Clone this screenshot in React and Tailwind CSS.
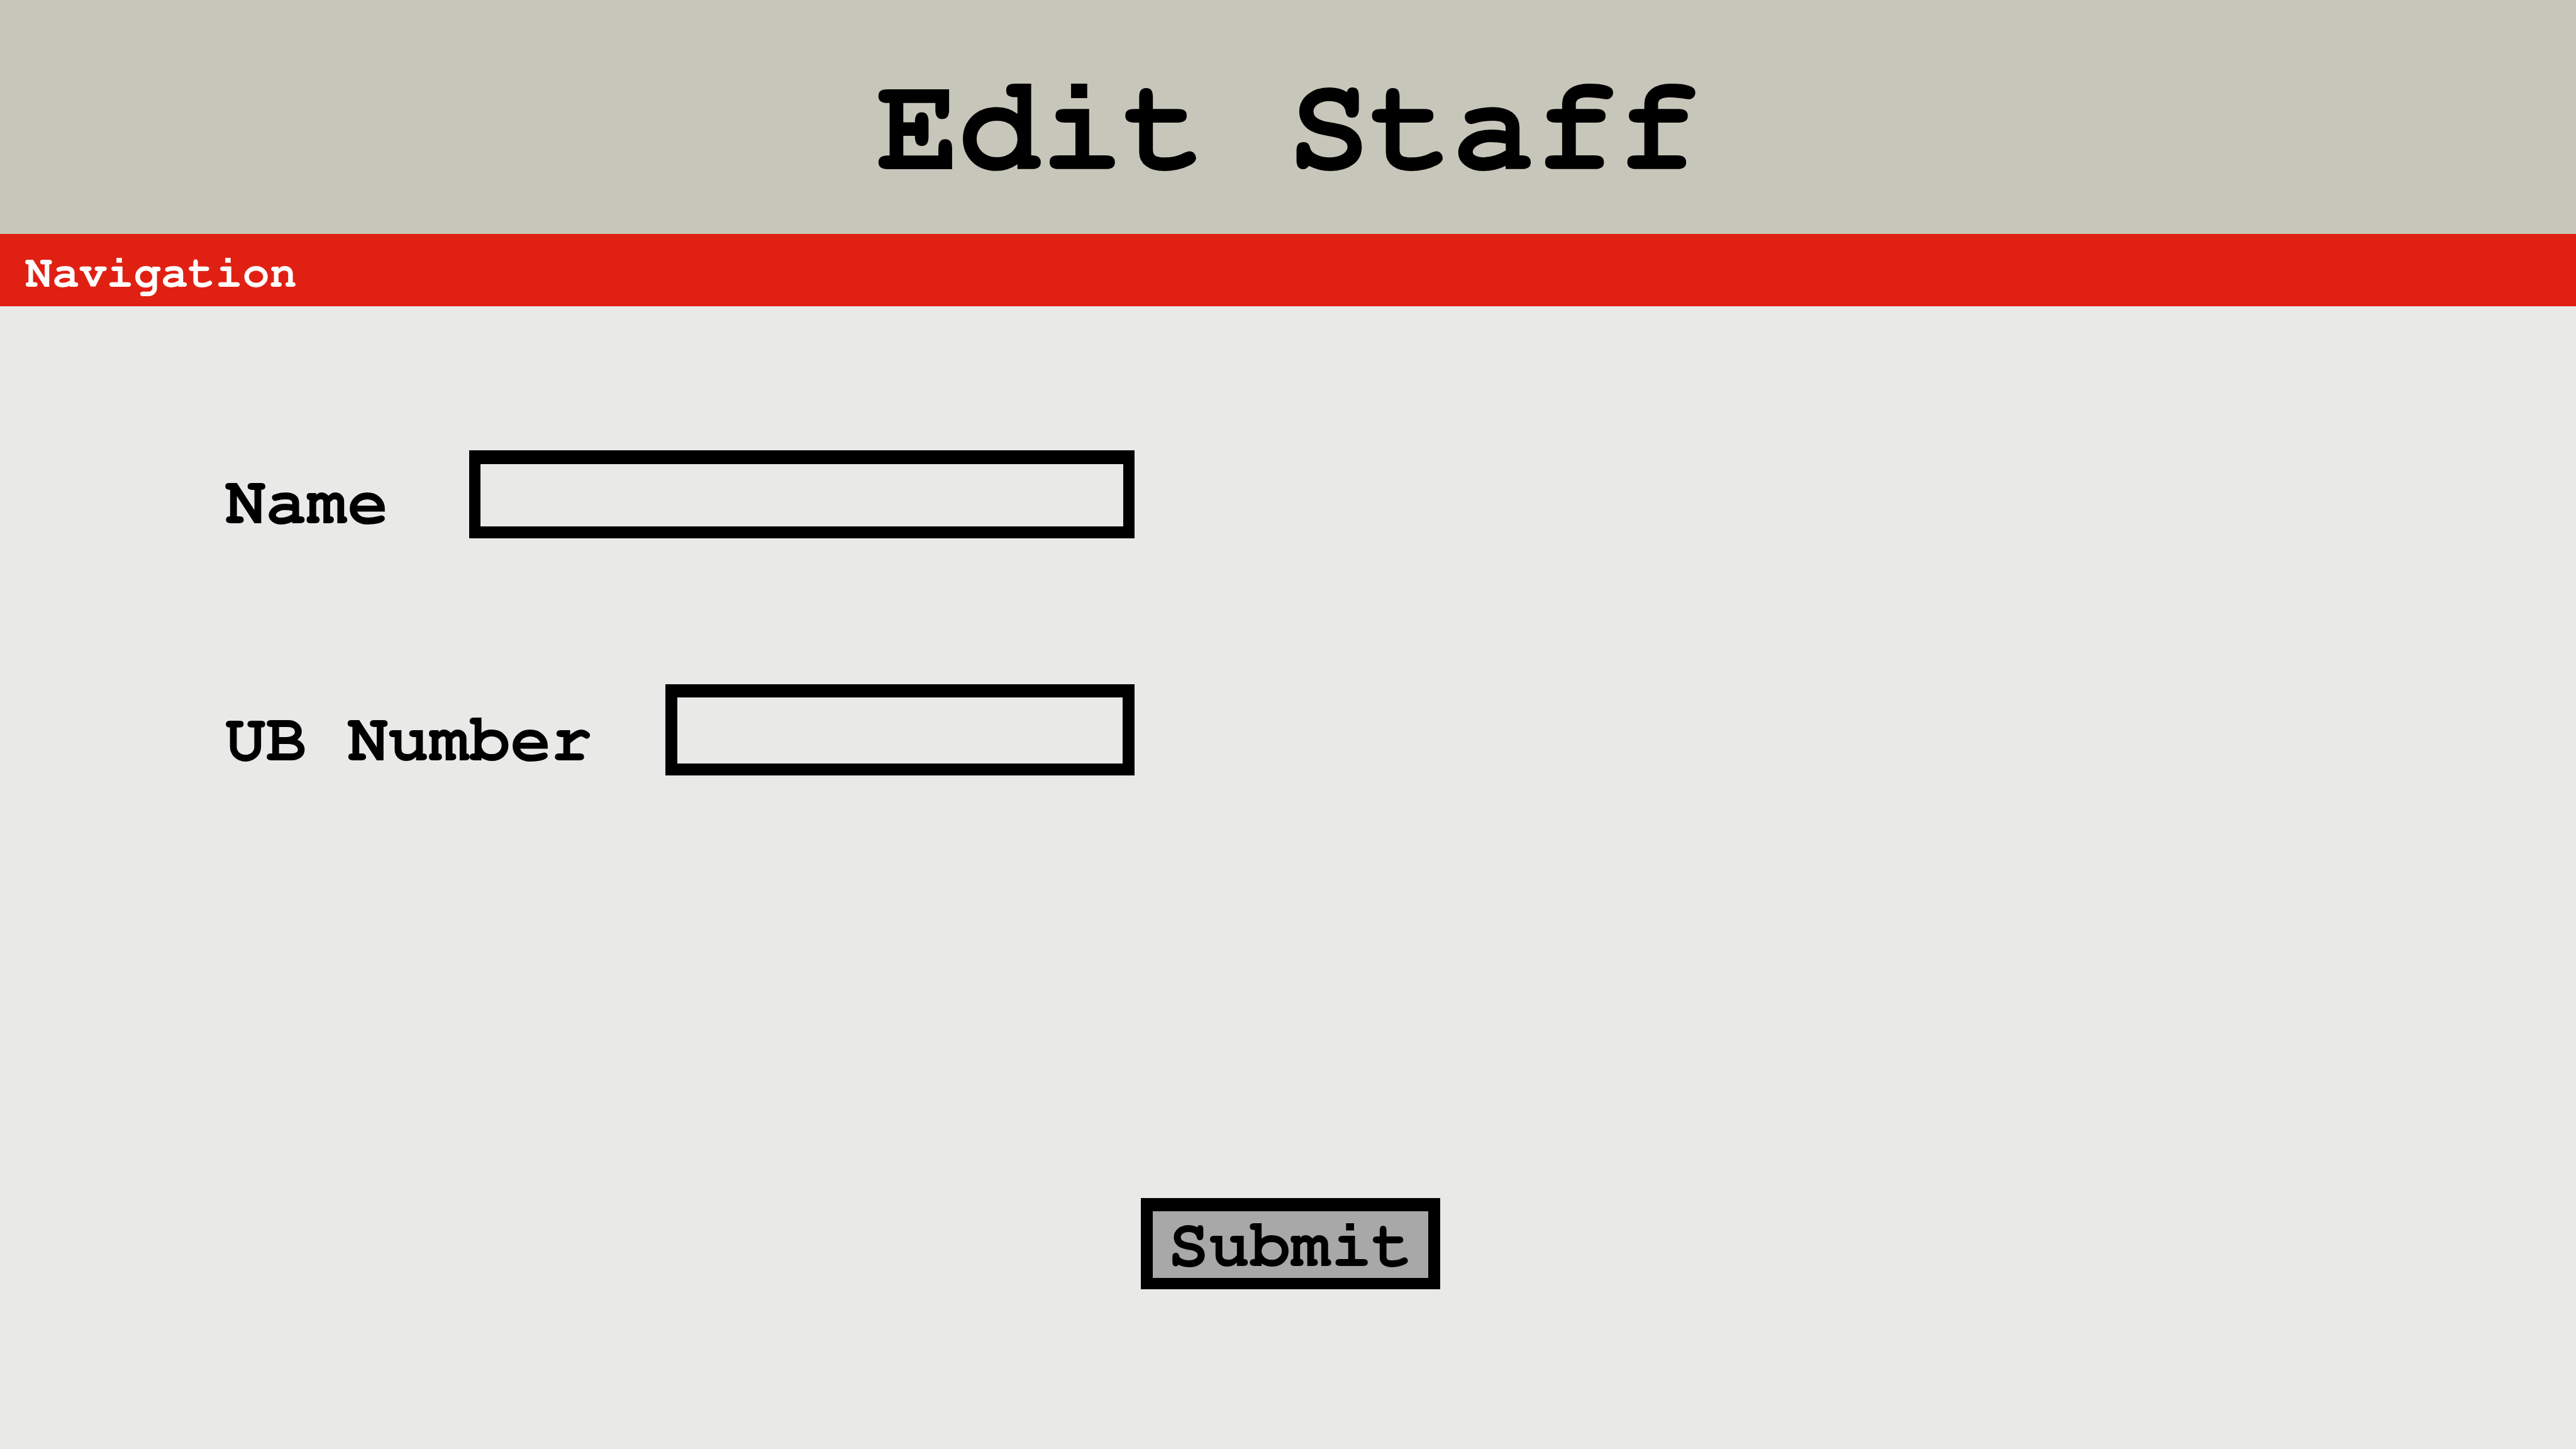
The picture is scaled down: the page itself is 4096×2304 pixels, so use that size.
export default function App() {
  return (
    <div className="flex min-h-screen w-full flex-col bg-[#e9e9e7] font-['FreeMono','Liberation_Mono',monospace] font-bold text-black">
      <header className="flex h-[372px] items-center justify-center bg-[#c7c6ba] pt-9">
        <h1 className="text-[218px] leading-[240px]">Edit Staff</h1>
      </header>
      <nav className="flex h-[115px] items-center bg-[#e12014] px-10">
        <a href="#navigation" className="pt-2 text-[72px] leading-[80px] text-white">
          Navigation
        </a>
      </nav>
      <main className="flex-1">
        <form className="flex flex-col pt-[229px]" onSubmit={(e) => e.preventDefault()}>
          <div className="ml-[358px] flex w-[1446px] max-w-full flex-col gap-[232px]">
            <div className="flex h-[140px] items-center">
              <label htmlFor="name" className="w-[388px] shrink-0 pt-7 text-[108px] leading-[120px]">
                Name
              </label>
              <input
                id="name"
                type="text"
                className="h-full min-w-0 flex-1 border-x-[18px] border-t-[22px] border-b-[19px] border-black bg-transparent px-4 text-[80px] outline-none"
              />
            </div>
            <div className="flex h-[145px] items-center">
              <label htmlFor="ub-number" className="w-[700px] shrink-0 pt-8 text-[108px] leading-[120px]">
                UB Number
              </label>
              <input
                id="ub-number"
                type="text"
                className="h-full min-w-0 flex-1 border-x-[19px] border-t-[21px] border-b-[19px] border-black bg-transparent px-4 text-[80px] outline-none"
              />
            </div>
          </div>
          <div className="flex justify-center pt-[672px] pl-2">
            <button
              type="submit"
              className="flex h-[145px] w-[476px] items-center justify-center border-x-[19px] border-t-[21px] border-b-[18px] border-black bg-[#a8a8a8] pt-1 text-[108px] leading-[100px]"
            >
              Submit
            </button>
          </div>
        </form>
      </main>
    </div>
  );
}
